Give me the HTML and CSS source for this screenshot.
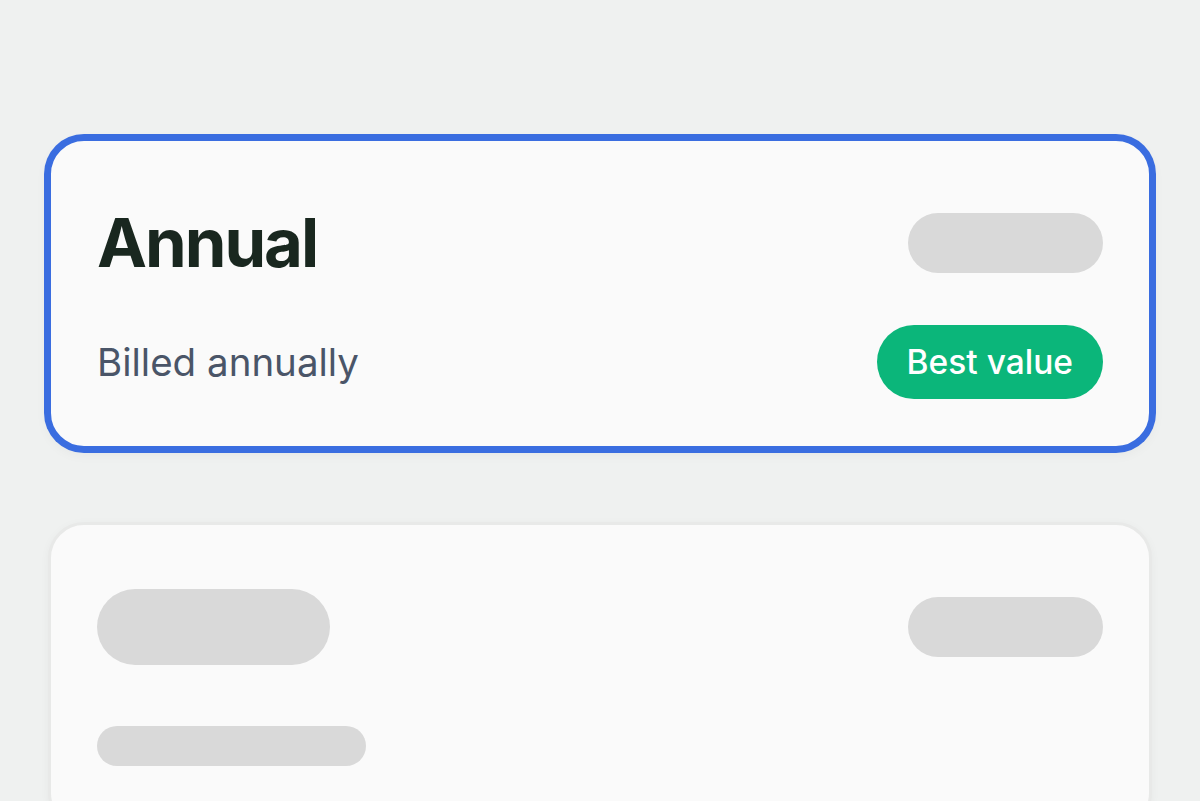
FILE: index.html
```html
<!DOCTYPE html>
<html>
<head>
    <title>Choose a plan</title>
    <link rel="stylesheet" href="styles.css">
</head>
<body>
    <div class="plans">
        <div class="plan selected">
            <div class="plan-row top">
                <h1 class="plan-name">Annual</h1>
                <div class="bone price"></div>
            </div>
            <div class="plan-row">
                <span class="plan-note">Billed annually</span>
                <span class="badge">Best value</span>
            </div>
        </div>
        <div class="plan loading">
            <div class="plan-row top">
                <div class="bone name"></div>
                <div class="bone price"></div>
            </div>
            <div class="plan-row">
                <div class="bone note"></div>
            </div>
        </div>
    </div>
</body>
</html>
```

FILE: styles.css
```css
html, body {
    margin: 0;
    padding: 0;
    height: 100%;
    overflow: hidden;
}

body {
    background-color: #eff1f0;
    font-family: Inter, "Noto Sans", sans-serif;
}

.plans {
    display: flex;
    flex-direction: column;
    gap: 73px;
    padding: 138px 48px 0;
}

.plan {
    display: flex;
    flex-direction: column;
    background-color: #fafafa;
    border: 3px solid #e8e9e8;
    border-radius: 36px;
    box-shadow: 0 2px 10px rgba(0, 0, 0, 0.04);
}

    .plan.selected {
        padding: 61px 46px 47px;
        gap: 41px;
        border-color: #3a6de0;
        box-shadow: 0 0 0 4px #3a6de0, 0 4px 14px rgba(0, 0, 0, 0.06);
    }

    .plan.loading {
        padding: 64px 46px 60px;
        gap: 61px;
    }

.plan-row {
    display: flex;
    align-items: center;
    justify-content: space-between;
}

.plan-name {
    margin: 0;
    font-size: 67px;
    line-height: 82px;
    font-weight: 700;
    letter-spacing: -0.03em;
    color: #19271f;
}

.plan-note {
    font-size: 38.5px;
    color: #4a5568;
}

.badge {
    display: inline-flex;
    align-items: center;
    height: 74px;
    padding: 0 30px;
    border-radius: 999px;
    background-color: #0bb67a;
    color: white;
    font-size: 33.5px;
    font-weight: 500;
}

/* placeholder blocks while a plan loads */
.bone {
    background-color: #d9d9d9;
    border-radius: 999px;
}

    .bone.price {
        width: 195px;
        height: 60px;
    }

    .bone.name {
        width: 233px;
        height: 76px;
    }

    .bone.note {
        width: 269px;
        height: 40px;
    }
```
